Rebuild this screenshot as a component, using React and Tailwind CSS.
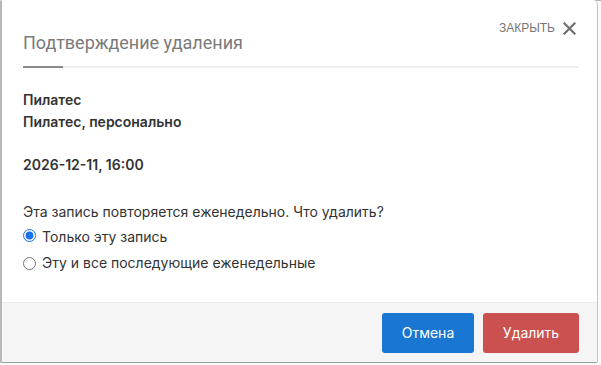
import React, { useState } from 'react';

export default function App() {
  const [scope, setScope] = useState('one');

  return (
    <div className="relative w-[601px] h-[365px] bg-[#fafafa] overflow-hidden" style={{ fontFamily: 'Inter, "Noto Sans", sans-serif' }}>
      {/* page behind the modal */}
      <div className="absolute left-0 top-0 h-[1px] w-[160px] bg-[#2b6cb5]" />
      <div className="absolute left-[160px] top-0 h-[1px] w-[441px] bg-[#b0b0b0]" />

      <div className="relative flex flex-col w-[598px] h-[363px] bg-white border-l-2 border-r border-b border-t border-t-transparent border-l-[#b8b8b8] border-r-[#c4c4c4] border-b-[#9e9e9e] rounded-tr-[5px] rounded-br-[2px]">
        <button
          className="absolute right-[21px] top-[20px] flex items-center gap-[8px] text-[12px] leading-[14px] text-[#757575]"
          style={{ fontFamily: '"Liberation Sans", Arial, sans-serif' }}
        >
          ЗАКРЫТЬ
          <svg width="13" height="13" viewBox="0 0 13 13" className="mt-[1px]">
            <path d="M1.5 1.5 L11.5 11.5 M11.5 1.5 L1.5 11.5" stroke="#6f6f6f" strokeWidth="2.2" strokeLinecap="square" />
          </svg>
        </button>

        <div className="px-[21px] pt-[29px]">
          <h2 className="text-[18px] leading-[26px] text-[#7a7a7a] font-normal" style={{ fontFamily: 'Roboto, "Noto Sans", sans-serif' }}>Подтверждение удаления</h2>
          <div className="mt-[10px] mr-[-3px] flex h-[2px]">
            <div className="w-[40px] bg-[#8a8a8a]" />
            <div className="flex-1 bg-[#eeeeee]" />
          </div>
        </div>

        <div className="flex-1 px-[21px] pt-[21px] text-[14px] text-[#333]">
          <div className="font-semibold leading-[22px]">Пилатес</div>
          <div className="font-semibold leading-[22px]">Пилатес, персонально</div>
          <div className="font-semibold leading-[22px] mt-[21px]">2026-12-11, 16:00</div>

          <div className="mt-[25px] leading-[22px]">Эта запись повторяется еженедельно. Что удалить?</div>
          <label className="flex items-center gap-[6px] h-[24px] mt-[2px]">
            <input
              type="radio"
              name="scope"
              checked={scope === 'one'}
              onChange={() => setScope('one')}
              className="w-[13px] h-[13px] m-0 accent-[#1a73e8] -mt-[4px]"
            />
            <span className="leading-[22px]">Только эту запись</span>
          </label>
          <label className="flex items-center gap-[6px] h-[24px] mt-[2px]">
            <input
              type="radio"
              name="scope"
              checked={scope === 'all'}
              onChange={() => setScope('all')}
              className="w-[13px] h-[13px] m-0 accent-[#1a73e8]"
            />
            <span className="leading-[22px]">Эту и все последующие еженедельные</span>
          </label>
        </div>

        <div className="h-[60px] flex items-center justify-end gap-[9px] pr-[18px] bg-[#f5f5f5] border-t border-[#ececec]">
          <button className="w-[92px] h-[40px] rounded-[3px] bg-[#1976d2] text-white text-[14px]">Отмена</button>
          <button className="w-[96px] h-[40px] rounded-[3px] bg-[#cb5050] text-white text-[14px]">Удалить</button>
        </div>
      </div>
    </div>
  );
}
